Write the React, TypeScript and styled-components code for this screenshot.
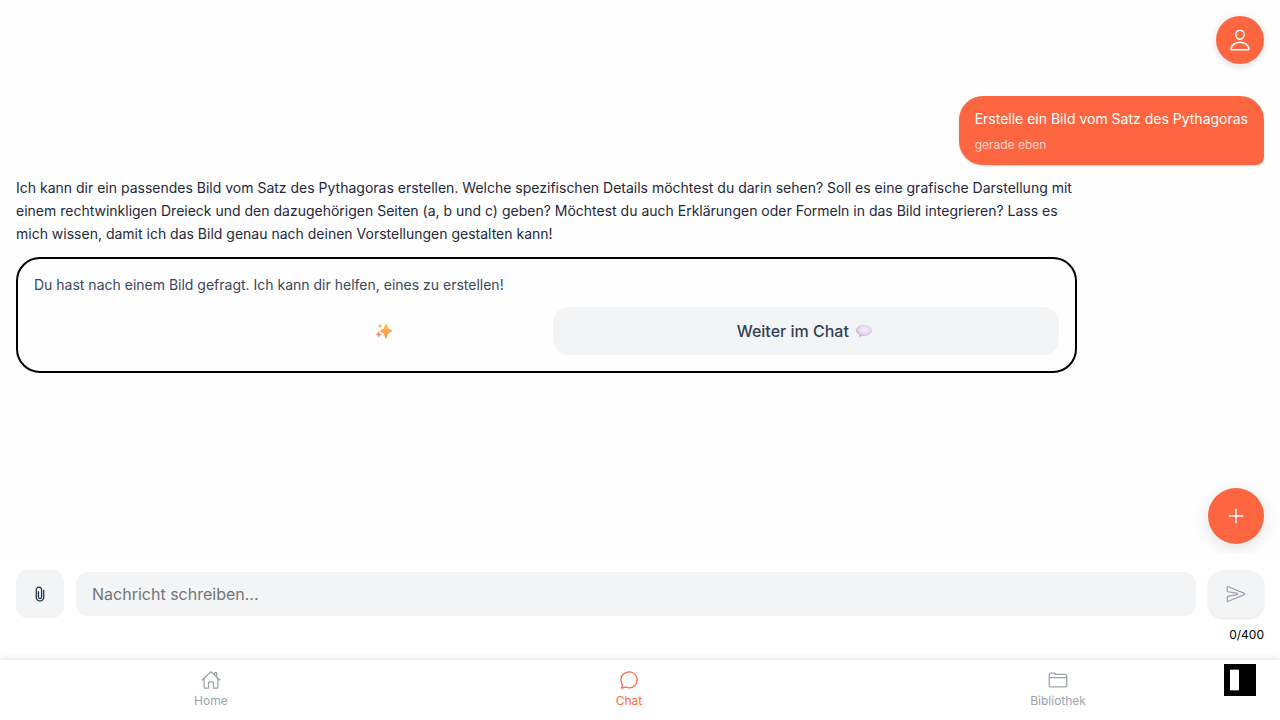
import React from 'react';
import styled, { createGlobalStyle } from 'styled-components';
import {
  IoPersonOutline,
  IoAddOutline,
  IoSendOutline,
  IoAttachOutline,
  IoHomeOutline,
  IoChatbubbleOutline,
  IoFolderOutline,
} from 'react-icons/io5';

const GlobalStyle = createGlobalStyle`
  *, *::before, *::after { box-sizing: border-box; }
  body { margin: 0; font-family: Inter, "Liberation Sans", sans-serif; background: #fff; }
  button, input { font: inherit; border: 0; margin: 0; padding: 0; }
`;

const Page = styled.div`
  position: relative;
  height: 720px;
  display: flex;
  flex-direction: column;
  overflow: hidden;
  background: #fefefe;
`;

const Header = styled.header`
  display: flex;
  justify-content: flex-end;
  padding: 16px 16px 0;
  height: 96px;
`;

const RoundButton = styled.button<{ $size: number; $shadow: string }>`
  display: flex;
  align-items: center;
  justify-content: center;
  width: ${(p) => p.$size}px;
  height: ${(p) => p.$size}px;
  border-radius: 50%;
  color: #fff;
  background: #fe6641;
  box-shadow: ${(p) => p.$shadow};
`;

const FabSlot = styled.div`
  position: absolute;
  right: 16px;
  top: 488px;
`;

const Messages = styled.main`
  flex: 1;
  display: flex;
  flex-direction: column;
  align-items: flex-start;
  padding: 0 16px;
`;

const UserBubble = styled.div`
  align-self: flex-end;
  height: 69.3px;
  padding: 12px 16px;
  border-radius: 24px 24px 8px 24px;
  color: #fff;
  background: #fe6641;
  box-shadow: 0 1px 2px rgba(0, 0, 0, 0.16);
  font-size: 14px;
  line-height: 22px;
`;

const Timestamp = styled.div`
  margin-top: 6px;
  font-size: 12px;
  line-height: 18px;
  opacity: 0.7;
`;

const Answer = styled.p`
  width: 85%;
  margin: 11px 0 11.6px;
  font-size: 14px;
  line-height: 23.1px;
  color: #1e293b;
`;

const PromptCard = styled.section`
  width: 85%;
  padding: 15.6px 16px 16px;
  border: 2px solid #000;
  border-radius: 24px;
`;

const PromptText = styled.p`
  margin: 0 0 12.8px;
  font-size: 14px;
  line-height: 19.2px;
  color: #3b475c;
`;

const PromptActions = styled.div`
  display: grid;
  grid-template-columns: 506.8px 1fr;
  gap: 12px;
`;

const PromptButton = styled.button<{ $filled?: boolean }>`
  display: flex;
  align-items: center;
  justify-content: center;
  gap: 6px;
  height: 48px;
  padding-left: ${(p) => (p.$filled ? 0 : 194)}px;
  border-radius: 16px;
  font-size: 16px;
  font-weight: 500;
  color: #334155;
  background: ${(p) => (p.$filled ? '#f3f4f6' : 'transparent')};
`;

const Composer = styled.form`
  position: relative;
  display: grid;
  grid-template-columns: 48px 1fr 56px;
  grid-template-rows: 48px auto;
  column-gap: 12px;
  align-items: center;
  height: 106px;
  padding: 16px 16px 0;
  background: #fff;
`;

const AttachButton = styled.button`
  display: flex;
  align-items: center;
  justify-content: center;
  height: 48px;
  border-radius: 12px;
  color: #1f2a44;
  background: #f3f4f6;
`;

const SendButton = styled(AttachButton)`
  border-radius: 16px;
  color: #9ca3af;
  box-shadow: 0 1px 2px rgba(0, 0, 0, 0.12);
`;

const MessageInput = styled.input`
  height: 44px;
  width: 100%;
  padding: 0 16px;
  border-radius: 12px;
  font-size: 16px;
  background: #f3f4f6;
  &::placeholder { color: #757575; opacity: 1; }
`;

const Counter = styled.span`
  grid-column: 1 / -1;
  justify-self: end;
  padding-top: 8px;
  align-self: start;
  font-size: 12px;
  line-height: 18px;
  color: #000;
`;

const TabBar = styled.nav`
  position: relative;
  display: flex;
  justify-content: space-around;
  height: 60px;
  padding-top: 10px;
  background: #fff;
  box-shadow: 0 -1px 6px rgba(0, 0, 0, 0.12);
`;

const Tab = styled.a<{ $active?: boolean }>`
  display: flex;
  flex-direction: column;
  align-items: center;
  gap: 2px;
  font-size: 12px;
  line-height: 18px;
  color: ${(p) => (p.$active ? '#fe6641' : '#9ca3af')};
`;

const CornerToggle = styled.div`
  position: absolute;
  right: 24px;
  top: 4px;
  width: 32px;
  height: 32px;
  padding: 5px 6px;
  background: #000;
  &::before {
    content: '';
    display: block;
    width: 9px;
    height: 22px;
    background: #fff;
    border: solid #5c5550;
    border-width: 1px 0 1px 0;
  }
`;

const Sparkles = () => (
  <svg width="18" height="18" viewBox="0 0 18 18">
    <defs>
      <linearGradient id="spark" x1="0" y1="0" x2="0" y2="1">
        <stop offset="0" stopColor="#fbc63f" />
        <stop offset="1" stopColor="#ff875d" />
      </linearGradient>
    </defs>
    <path fill="url(#spark)" d="M11 1.500C11.800 1.500 12.600 5.700 13.400 6.600c.9.8 3.900 1.700 3.900 2.400s-3 1.600-3.900 2.400c-.8.9-1.600 5.100-2.400 5.100S9.400 12.300 8.600 11.400C7.700 10.600 4.900 9.700 4.900 9s2.800-1.600 3.700-2.400C9.400 5.700 10.200 1.500 11 1.500Z" />
    <path fill="#f4af53" d="m5 1.400.7 1.900 1.800.7-1.800.7L5 6.600l-.7-1.900L2.500 4l1.800-.7Z" />
    <path fill="#f68b74" d="m3.700 9.200 1 2.300 2.300 1-2.300 1-1 2.500-1-2.500-2.300-1 2.300-1Z" />
  </svg>
);

const SpeechBalloon = () => (
  <svg width="20" height="18" viewBox="0 0 20 18">
    <defs>
      <radialGradient id="balloon" cx=".55" cy=".4" r=".6">
        <stop offset="0" stopColor="#f5effa" />
        <stop offset=".6" stopColor="#e4d8ee" />
        <stop offset="1" stopColor="#c0acd1" />
      </radialGradient>
    </defs>
    <path fill="url(#balloon)" d="M9 3.100c4.500 0 8 2.400 8 5.500s-3.500 5.500-8 5.500c-1 0-2-.1-2.800-.4-.6.800-1.600 1.200-2.600 1.200.5-.600.7-1.500.5-2.300C2.200 11.700 1 10.200 1 8.600c0-3.100 3.500-5.500 8-5.500Z" />
  </svg>
);

export default function App() {
  return (
    <>
      <GlobalStyle />
      <Page>
        <Header>
          <RoundButton $size={48} $shadow="0 2px 8px rgba(0, 0, 0, 0.12)" aria-label="Profil">
            <IoPersonOutline size={24} />
          </RoundButton>
        </Header>
        <Messages>
          <UserBubble>
            Erstelle ein Bild vom Satz des Pythagoras
            <Timestamp>gerade eben</Timestamp>
          </UserBubble>
          <Answer>
            Ich kann dir ein passendes Bild vom Satz des Pythagoras erstellen. Welche spezifischen Details möchtest du
            darin sehen? Soll es eine grafische Darstellung mit einem rechtwinkligen Dreieck und den dazugehörigen
            Seiten (a, b und c) geben? Möchtest du auch Erklärungen oder Formeln in das Bild integrieren? Lass es mich
            wissen, damit ich das Bild genau nach deinen Vorstellungen gestalten kann!
          </Answer>
          <PromptCard>
            <PromptText>Du hast nach einem Bild gefragt. Ich kann dir helfen, eines zu erstellen!</PromptText>
            <PromptActions>
              <PromptButton aria-label="Bild erstellen">
                <Sparkles />
              </PromptButton>
              <PromptButton $filled>
                Weiter im Chat
                <SpeechBalloon />
              </PromptButton>
            </PromptActions>
          </PromptCard>
        </Messages>
        <FabSlot>
          <RoundButton $size={56} $shadow="0 4px 16px rgba(0, 0, 0, 0.12)" aria-label="Neu">
            <IoAddOutline size={24} />
          </RoundButton>
        </FabSlot>
        <Composer>
          <AttachButton type="button" aria-label="Anhang">
            <IoAttachOutline size={20} />
          </AttachButton>
          <MessageInput placeholder="Nachricht schreiben..." />
          <SendButton type="button" aria-label="Senden">
            <IoSendOutline size={20} />
          </SendButton>
          <Counter>0/400</Counter>
        </Composer>
        <TabBar>
          <Tab>
            <IoHomeOutline size={20} />
            Home
          </Tab>
          <Tab $active>
            <IoChatbubbleOutline size={20} />
            Chat
          </Tab>
          <Tab>
            <IoFolderOutline size={20} />
            Bibliothek
          </Tab>
          <CornerToggle />
        </TabBar>
      </Page>
    </>
  );
}
